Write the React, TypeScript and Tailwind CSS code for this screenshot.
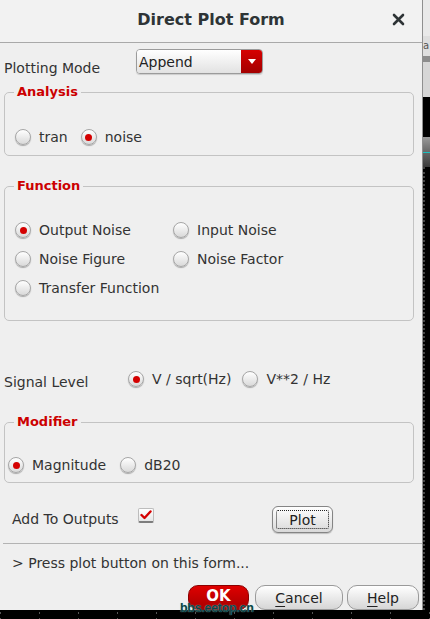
import React from 'react';

const Radio: React.FC<{ checked?: boolean }> = ({ checked }) => (
  <span className="w-[16px] h-[16px] shrink-0 rounded-full border border-[#a6a6a6] bg-linear-to-b from-white to-[#d9d9d9] shadow-[0_1px_1px_rgba(0,0,0,0.3)] flex items-center justify-center">
    {checked && <span className="w-[7px] h-[7px] rounded-full bg-[#d40000]" />}
  </span>
);

const Option: React.FC<{ label: string; checked?: boolean; className?: string }> = ({ label, checked, className }) => (
  <label className={`flex items-center gap-[8px] h-[16px] ${className ?? ''}`}>
    <Radio checked={checked} />
    <span>{label}</span>
  </label>
);

const Group: React.FC<{ title: string; className?: string; children: React.ReactNode }> = ({ title, className, children }) => (
  <fieldset className={`ml-[4px] w-[410px] border border-[#c3c3c3] rounded-[5px] p-0 min-w-0 ${className ?? ''}`}>
    <legend className="ml-[9px] px-[3px] text-[13px] leading-[16px] font-bold text-[#cc0000]">{title}</legend>
    {children}
  </fieldset>
);

const Underlined: React.FC<{ first: string; rest: string }> = ({ first, rest }) => (
  <span>
    <span className="underline underline-offset-[3px]">{first}</span>
    {rest}
  </span>
);

const SideStrip: React.FC = () => (
  <div className="flex-1 flex flex-col">
    <div className="h-[36px] bg-[#e9e9e9]" />
    <div className="h-[20px] bg-[#dedede] text-[10px] leading-[20px] text-[#555] overflow-hidden">a</div>
    <div className="h-[6px] bg-[#8c8c8c]" />
    <div className="h-[35px] bg-[#d6d6d6]" />
    <div className="h-[40px] bg-black" />
    <div className="h-[30px] bg-linear-to-b from-[#9a9a9a] to-[#3a3a3a] flex flex-col justify-center">
      <div className="h-[1px] bg-[#19c0c0]" />
    </div>
    <div className="flex-1 bg-black border-l-[2px] border-dotted border-[#444]" />
  </div>
);

export default function App() {
  return (
    <div className="relative w-[430px] h-[619px] overflow-hidden bg-black flex flex-col font-['DejaVu_Sans',sans-serif] text-[14px] leading-[16px] text-[#333]">
      <div className="flex h-[610px]">
        <div className="w-[423px] flex flex-col bg-[#efefef] border-r border-[#8f8f8f]">
          <div className="h-[43px] bg-[#f2f2f2] grid grid-cols-[1fr_auto_1fr] items-center pb-[3px]">
            <div />
            <div className="text-[16px] font-bold text-[#2e3436]">Direct Plot Form</div>
            <div className="justify-self-end mr-[17px]">
              <svg width="13" height="13" viewBox="0 0 13 13">
                <path d="M2 2 L11 11 M11 2 L2 11" stroke="#2e3436" strokeWidth="2.6" strokeLinecap="round" />
              </svg>
            </div>
          </div>
          <div className="h-[1px] bg-[#a9a9a9]" />

          <div className="flex items-start mt-[6px]">
            <div className="w-[136px] pl-[4px] mt-[11px]">Plotting Mode</div>
            <div className="w-[127px] h-[25px] flex rounded-[4px] border border-[#9b9b9b] overflow-hidden shadow-[0_1px_1px_rgba(0,0,0,0.15)]">
              <div className="flex-1 bg-linear-to-b from-white to-[#e2e2e2] pl-[2px] flex items-center text-[#222]">Append</div>
              <div className="w-[21px] bg-linear-to-b from-[#d60000] to-[#a30000] flex items-center justify-center">
                <svg width="8" height="5" viewBox="0 0 8 5">
                  <path d="M0 0 H8 L4 5 Z" fill="#fff" />
                </svg>
              </div>
            </div>
          </div>

          <Group title="Analysis" className="mt-[8px]">
            <div className="flex pl-[10px] pt-[29px] pb-[10px] gap-[13px]">
              <Option label="tran" />
              <Option label="noise" checked />
            </div>
          </Group>

          <Group title="Function" className="mt-[22px]">
            <div className="grid grid-cols-[158px_auto] gap-y-[13px] pl-[10px] pt-[28px] pb-[24px]">
              <Option label="Output Noise" checked />
              <Option label="Input Noise" />
              <Option label="Noise Figure" />
              <Option label="Noise Factor" />
              <Option label="Transfer Function" />
            </div>
          </Group>

          <div className="flex items-start mt-[50px]">
            <div className="w-[128px] pl-[4px] mt-[3px]">Signal Level</div>
            <div className="flex gap-[11px]">
              <Option label="V / sqrt(Hz)" checked />
              <Option label="V**2 / Hz" />
            </div>
          </div>

          <Group title="Modifier" className="mt-[24px]">
            <div className="flex pl-[3px] pt-[27px] pb-[9px] gap-[14px]">
              <Option label="Magnitude" checked />
              <Option label="dB20" />
            </div>
          </Group>

          <div className="flex items-start mt-[23px]">
            <div className="w-[138px] pl-[12px] mt-[5px]">Add To Outputs</div>
            <div className="w-[16px] h-[15px] mt-[2px] rounded-[2px] border border-[#bdbdbd] border-b-[2px] border-b-[#7d7d7d] bg-linear-to-b from-white to-[#e6e6e6] flex items-center justify-center">
              <svg width="12" height="10" viewBox="0 0 12 10">
                <path d="M1.5 5 L4.5 8 L10.5 1.5" stroke="#d40000" strokeWidth="2.4" fill="none" strokeLinecap="round" strokeLinejoin="round" />
              </svg>
            </div>
            <div className="ml-[118px] w-[61px] h-[27px] p-[3px] rounded-[6px] border border-[#858585] bg-linear-to-b from-white to-[#d9d9d9] shadow-[0_1px_1px_rgba(0,0,0,0.2)]">
              <div className="w-full h-full border border-dotted border-[#222] rounded-[2px] flex items-center justify-center text-[#222]">Plot</div>
            </div>
          </div>

          <div className="mt-[10px] ml-[3px] h-[1px] bg-[#b3b3b3]" />

          <div className="mt-[11px] pl-[12px]">&gt; Press plot button on this form...</div>

          <div className="mt-[14px] flex justify-end pr-[3px] h-[25px]">
            <div className="w-[61px] rounded-[10px] bg-linear-to-b from-[#e00000] to-[#a80000] border border-[#8c0000] flex items-center justify-center text-white font-bold text-[15px] pb-[3px]">OK</div>
            <div className="ml-[6px] w-[88px] rounded-[10px] border border-[#9a9a9a] bg-linear-to-b from-white to-[#d6d6d6] flex items-center justify-center text-[#222]">
              <Underlined first="C" rest="ancel" />
            </div>
            <div className="ml-[4px] w-[72px] rounded-[10px] border border-[#9a9a9a] bg-linear-to-b from-white to-[#d6d6d6] flex items-center justify-center text-[#222]">
              <Underlined first="H" rest="elp" />
            </div>
          </div>
        </div>
        <SideStrip />
      </div>
      <div className="flex-1 bg-black bg-[radial-gradient(circle,#555_0.8px,transparent_1px)] bg-[length:39px_6px] bg-[position:20px_0]" />
      <div className="absolute left-[180px] top-[601px] text-[12.5px] leading-[14px] font-bold tracking-[-0.3px] text-[#0b4544] [text-shadow:0_0_1px_#9cc] font-['Liberation_Sans',sans-serif]">
        bbs.eetop.cn
      </div>
    </div>
  );
}
